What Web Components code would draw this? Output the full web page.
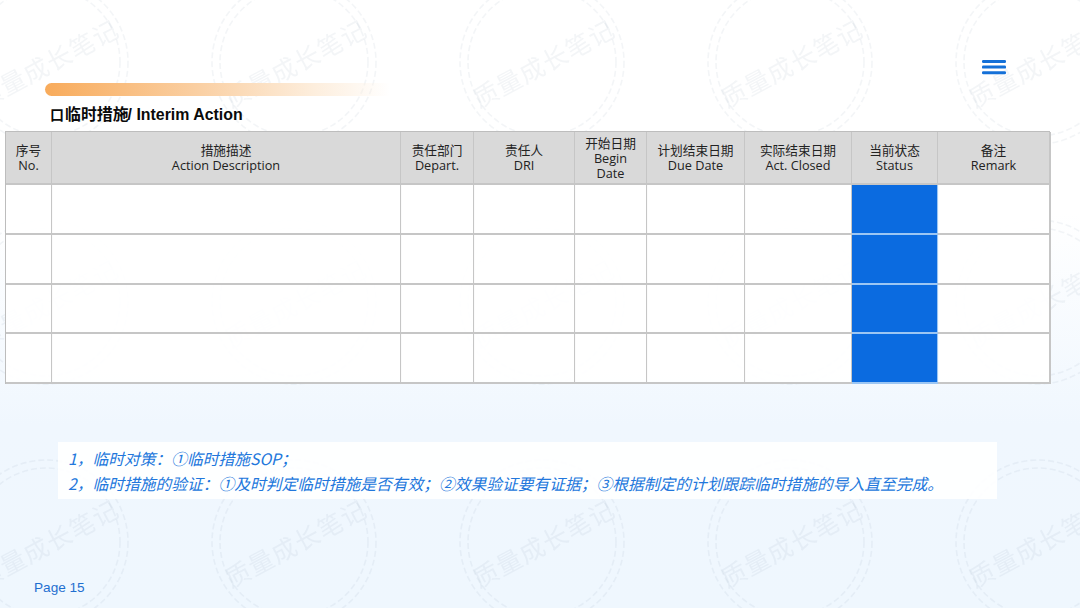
<!DOCTYPE html>
<html lang="zh"><head><meta charset="utf-8"><title>Interim Action</title>
<style>
html,body{margin:0;padding:0}
body{width:1080px;height:608px;overflow:hidden;font-family:"Open Sans","Noto Sans CJK SC",sans-serif}
</style></head><body>
<slide-page>
  <menu-icon slot="menu"></menu-icon>
  <section-title slot="head"><span style="font-size:14px;margin-right:1px">口</span>临时措施<span style="margin-left:-1px">/ Interim Action</span></section-title>
  <action-table slot="table"></action-table>
  <note-box slot="note">
    <div>1，临时对策：①临时措施SOP；</div>
    <div>2，临时措施的验证：①及时判定临时措施是否有效；②效果验证要有证据；③根据制定的计划跟踪临时措施的导入直至完成。</div>
  </note-box>
  <span slot="foot">Page 15</span>
</slide-page>
<script>
function def(name, html, setup){
  customElements.define(name, class extends HTMLElement{
    constructor(){super();this.attachShadow({mode:'open'}).innerHTML=html;}
    connectedCallback(){ if(setup) setup(this); }
  });
}
def('water-mark',`<style>
:host{display:grid;grid-template-columns:repeat(5,248px);grid-auto-rows:240px;position:absolute;left:-74px;top:-56px;pointer-events:none;filter:blur(.6px)}
svg{width:248px;height:240px;display:block}
text{font:25px "Noto Sans CJK SC",sans-serif;fill:#8aa0b4;fill-opacity:.1;letter-spacing:1px}
circle{fill:none;stroke:#8aa0b4;stroke-opacity:.1;stroke-width:1.6;stroke-dasharray:6 3}
</style><div id="g" style="display:contents"></div>`,el=>{
  const g=el.shadowRoot.getElementById('g');let s='';
  for(let i=0;i<15;i++) s+=`<svg viewBox="0 0 248 240"><circle cx="120" cy="118" r="82"/><circle cx="120" cy="118" r="74" stroke-dasharray="14 5 3 5"/><text transform="rotate(-28 122 120)" x="122" y="129" text-anchor="middle">质量成长笔记</text></svg>`;
  g.innerHTML=s;
});
def('slide-page',`<style>
:host{display:block;position:relative;width:1080px;height:608px;overflow:hidden;background:linear-gradient(180deg,#ffffff 0%,#ffffff 35%,#f0f7fe 70%,#eff7fe 100%)}
.content{position:relative;display:flex;flex-direction:column;height:608px;box-sizing:border-box}
.top{display:flex;justify-content:space-between;padding:60px 74px 0 45px;height:83px;box-sizing:border-box}
.bar{height:13px;width:345px;margin-top:23px;border-radius:7px 0 0 7px;background:linear-gradient(90deg,#f8ab5b 0%,#fad0a4 45%,#fdeedd 78%,rgba(255,255,255,0) 100%)}
.head{padding:9px 0 0 50px;height:35px;box-sizing:border-box;margin-top:13px}
.table{padding-left:5px}
.note{padding:58px 0 0 58px}
.foot{margin-top:auto;padding:0 0 13px 34px;font:13.6px "Liberation Sans",sans-serif;color:#1f6fd0}
</style><water-mark></water-mark><div class="content">
<div class="top"><div class="bar"></div><slot name="menu"></slot></div>
<div class="head"><slot name="head"></slot></div>
<div class="table"><slot name="table"></slot></div>
<div class="note"><slot name="note"></slot></div>
<div class="foot"><slot name="foot"></slot></div></div>`);
def('menu-icon',`<style>:host{display:block;width:24px;height:16px}svg{display:block}</style>
<svg width="24" height="16" viewBox="0 0 24 16"><g fill="#1470d8"><rect x="0" y="0" width="24" height="3" rx="1.2"/><rect x="0" y="5.6" width="24" height="3" rx="1.2"/><rect x="0" y="11.2" width="24" height="3" rx="1.2"/></g></svg>`);
def('section-title',`<style>:host{display:block;font:700 15.9px/20px "Liberation Sans","Noto Sans CJK SC",sans-serif;color:#0a0a0a}</style><slot></slot>`);
def('note-box',`<style>:host{display:block;width:939px;height:57px;box-sizing:border-box;padding:4px 0 0 10px;background:rgba(255,255,255,.9);font:italic 400 15.75px/25px "Noto Sans CJK SC",sans-serif;color:#2277dc}</style><slot></slot>`);
const cols=[46,349,73,101,72,98,107,86,112];
const heads=[['序号','No.'],['措施描述','Action Description'],['责任部门','Depart.'],['责任人','DRI'],['开始日期','Begin','Date'],['计划结束日期','Due Date'],['实际结束日期','Act. Closed'],['当前状态','Status'],['备注','Remark']];
def('action-table',`<style>
:host{display:grid;width:1045px;grid-template-columns:${cols.join('px ')}px;grid-template-rows:53px 50px 50px 49px 50px;box-sizing:border-box;border-top:1px solid #bdbdbd;border-left:1px solid #bdbdbd}
.c{border-right:2px solid #c6c6c6;border-bottom:2px solid #c6c6c6;box-sizing:border-box;background:rgba(255,255,255,.92);margin-right:-1px}
.h{background:#d9d9d9;display:flex;flex-direction:column;align-items:center;justify-content:center;text-align:center;font-size:12.7px;line-height:15px;color:#222;padding-top:1px}
.s{background:#0b6be0;border-right-color:#9cc6f3;border-bottom-color:#9cc6f3}
</style><div id="g" style="display:contents"></div>`,el=>{
  const g=el.shadowRoot.getElementById('g');let s='';
  heads.forEach(h=>{s+='<div class="c h">'+h.map(t=>`<span>${t}</span>`).join('')+'</div>';});
  for(let r=0;r<4;r++)for(let c=0;c<9;c++)s+=`<div class="c${c==7?' s':''}"></div>`;
  g.innerHTML=s;
});
</script>
</body></html>
